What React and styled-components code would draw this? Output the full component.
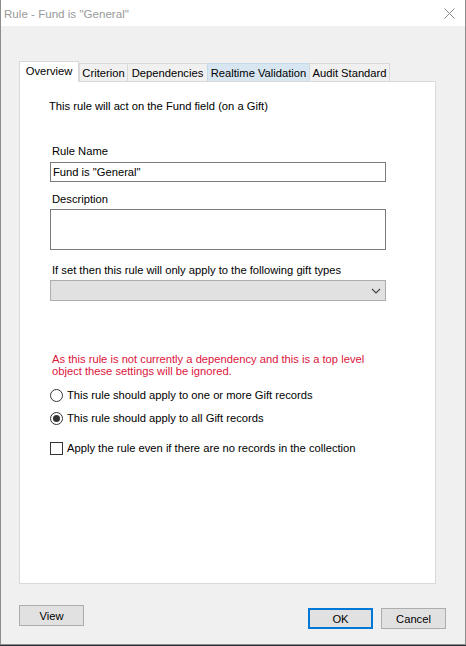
import React from "react";
import styled, { createGlobalStyle, css } from "styled-components";

const Global = createGlobalStyle`
  html, body { margin: 0; padding: 0; background: #26303b; overflow: hidden; }
  body { font-family: "Liberation Sans", Arial, sans-serif; font-size: 11.2px; color: #000; }
  * { box-sizing: border-box; }
`;

const Window = styled.div`
  width: 466px;
  height: 645px;
  border: 1px solid #8c8c8c;
  border-top: none;
  display: flex;
  flex-direction: column;
  background: #f0f0f0;
`;

const TitleBar = styled.div`
  height: 26px;
  background: #fff;
  display: flex;
  align-items: center;
  justify-content: space-between;
  padding: 0 10px 0 3px;
`;

const Title = styled.span`
  font-size: 11.6px;
  color: #9a9a9a;
  padding-top: 1px;
`;

const CloseIcon = () => (
  <svg width="11" height="11" viewBox="0 0 11 11" style={{ marginTop: 1 }}>
    <path d="M0.5 0.5 L10.5 10.5 M10.5 0.5 L0.5 10.5" stroke="#8a8a8a" strokeWidth="1" fill="none" />
  </svg>
);

const Body = styled.div`
  flex: 1;
  display: flex;
  flex-direction: column;
  padding: 35px 0 0 18px;
`;

const TabArea = styled.div`
  margin-right: 29px;
  display: flex;
  flex-direction: column;
`;

const TabRow = styled.div`
  display: flex;
  align-items: flex-end;
  height: 20px;
`;

const Tab = styled.div`
  width: ${(p) => p.$w}px;
  height: 18px;
  border: 1px solid #d9d9d9;
  border-bottom: none;
  border-right: ${(p) => (p.$last ? "1px solid #d9d9d9" : "none")};
  background: #f0f0f0;
  display: flex;
  align-items: center;
  justify-content: center;
  padding-top: 1px;
  white-space: nowrap;
  ${(p) =>
    p.$hover &&
    css`
      background: #d8e6f2;
      border-color: #c5d9ec;
    `}
  ${(p) =>
    p.$active &&
    css`
      height: 21px;
      margin-bottom: -1px;
      background: #fff;
      border-right: 1px solid #d9d9d9;
      position: relative;
      z-index: 1;
      padding-top: 0;
      padding-bottom: 2px;
    `}
`;

const Panel = styled.div`
  height: 503px;
  border: 1px solid #d9d9d9;
  background: #fff;
  padding: 18px 0 0 29px;
  display: flex;
  flex-direction: column;
`;

const Text = styled.div`
  line-height: 13px;
  white-space: nowrap;
`;

const Form = styled.div`
  margin-left: 1px;
  width: 336px;
  display: flex;
  flex-direction: column;
`;

const Label = styled.div`
  line-height: 13px;
  padding-left: 2px;
  margin-top: ${(p) => p.$mt}px;
  white-space: nowrap;
`;

const Input = styled.div`
  margin-top: ${(p) => p.$mt}px;
  height: ${(p) => p.$h}px;
  border: 1px solid #7a7a7a;
  background: #fff;
  padding: 3px 2px 0;
  line-height: 13px;
`;

const Combo = styled.div`
  margin-top: 3px;
  height: 21px;
  border: 1px solid #adadad;
  background: #e1e1e1;
  display: flex;
  align-items: center;
  justify-content: flex-end;
  padding-right: 4px;
`;

const Warning = styled.div`
  margin-top: 52px;
  padding-left: 2px;
  color: #dc143c;
  line-height: 12px;
  white-space: nowrap;
`;

const OptionRow = styled.div`
  margin-top: ${(p) => p.$mt}px;
  height: 13px;
  display: flex;
  align-items: center;
  gap: 4px;
  line-height: 13px;
  white-space: nowrap;
`;

const Radio = styled.span`
  width: 13px;
  height: 13px;
  border-radius: 50%;
  border: 1px solid #333;
  background: #fff;
  display: flex;
  align-items: center;
  justify-content: center;
  flex: none;
  &::after {
    content: "";
    width: 7px;
    height: 7px;
    border-radius: 50%;
    background: ${(p) => (p.$checked ? "#333" : "transparent")};
  }
`;

const Check = styled.span`
  width: 13px;
  height: 13px;
  border: 1px solid #333;
  background: #fff;
  flex: none;
`;

const Footer = styled.div`
  margin-top: 21px;
  padding-right: 19px;
  display: flex;
  justify-content: space-between;
  align-items: flex-start;
`;

const ButtonGroup = styled.div`
  display: flex;
  gap: 8px;
  margin-top: 3px;
`;

const Button = styled.div`
  width: 65px;
  height: 21px;
  background: #e1e1e1;
  border: 1px solid #adadad;
  display: flex;
  align-items: center;
  justify-content: center;
  ${(p) =>
    p.$default &&
    css`
      border: 2px solid #0078d7;
    `}
`;

const Chevron = () => (
  <svg width="10" height="6" viewBox="0 0 10 6">
    <path d="M1 1 L5 5 L9 1" stroke="#404040" strokeWidth="1.1" fill="none" />
  </svg>
);

const tabs = [
  { label: "Overview", w: 60, active: true },
  { label: "Criterion", w: 48 },
  { label: "Dependencies", w: 80 },
  { label: "Realtime Validation", w: 102, hover: true },
  { label: "Audit Standard", w: 81, last: true },
];

export default function App() {
  return (
    <>
      <Global />
      <Window>
        <TitleBar>
          <Title>Rule - Fund is "General"</Title>
          <CloseIcon />
        </TitleBar>
        <Body>
          <TabArea>
            <TabRow>
              {tabs.map((t) => (
                <Tab key={t.label} $w={t.w} $active={t.active} $hover={t.hover} $last={t.last}>
                  {t.label}
                </Tab>
              ))}
            </TabRow>
            <Panel>
              <Text>This rule will act on the Fund field (on a Gift)</Text>
              <Form>
                <Label $mt={32}>Rule Name</Label>
                <Input $mt={4} $h={20}>Fund is "General"</Input>
                <Label $mt={11}>Description</Label>
                <Input $mt={3} $h={41} />
                <Label $mt={14}>If set then this rule will only apply to the following gift types</Label>
                <Combo>
                  <Chevron />
                </Combo>
                <Warning>
                  As this rule is not currently a dependency and this is a top level
                  <br />
                  object these settings will be ignored.
                </Warning>
                <OptionRow $mt={12}>
                  <Radio />
                  This rule should apply to one or more Gift records
                </OptionRow>
                <OptionRow $mt={10}>
                  <Radio $checked />
                  This rule should apply to all Gift records
                </OptionRow>
                <OptionRow $mt={17}>
                  <Check />
                  Apply the rule even if there are no records in the collection
                </OptionRow>
              </Form>
            </Panel>
          </TabArea>
          <Footer>
            <Button>View</Button>
            <ButtonGroup>
              <Button $default>OK</Button>
              <Button>Cancel</Button>
            </ButtonGroup>
          </Footer>
        </Body>
      </Window>
    </>
  );
}
